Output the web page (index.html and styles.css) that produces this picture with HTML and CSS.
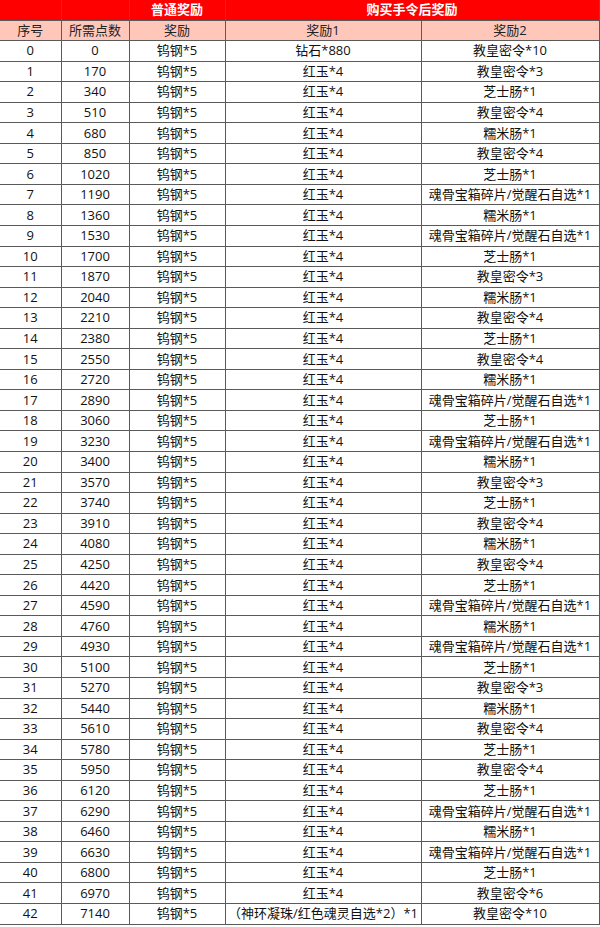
FILE: index.html
```html
<!DOCTYPE html>
<html lang="zh-CN">
<head>
<meta charset="utf-8">
<title>奖励表</title>
<link rel="stylesheet" href="styles.css">
</head>
<body>
<table class="rewards">
<colgroup>
<col class="c1"><col class="c2"><col class="c3"><col class="c4"><col class="c5">
</colgroup>
<thead>
<tr class="head-main"><th></th><th></th><th>普通奖励</th><th colspan="2">购买手令后奖励</th></tr>
<tr class="head-sub"><th>序号</th><th>所需点数</th><th>奖励</th><th>奖励1</th><th>奖励2</th></tr>
</thead>
<tbody>
<tr><td>0</td><td>0</td><td>钨钢*5</td><td>钻石*880</td><td>教皇密令*10</td></tr>
<tr><td>1</td><td>170</td><td>钨钢*5</td><td>红玉*4</td><td>教皇密令*3</td></tr>
<tr><td>2</td><td>340</td><td>钨钢*5</td><td>红玉*4</td><td>芝士肠*1</td></tr>
<tr><td>3</td><td>510</td><td>钨钢*5</td><td>红玉*4</td><td>教皇密令*4</td></tr>
<tr><td>4</td><td>680</td><td>钨钢*5</td><td>红玉*4</td><td>糯米肠*1</td></tr>
<tr><td>5</td><td>850</td><td>钨钢*5</td><td>红玉*4</td><td>教皇密令*4</td></tr>
<tr><td>6</td><td>1020</td><td>钨钢*5</td><td>红玉*4</td><td>芝士肠*1</td></tr>
<tr><td>7</td><td>1190</td><td>钨钢*5</td><td>红玉*4</td><td>魂骨宝箱碎片/觉醒石自选*1</td></tr>
<tr><td>8</td><td>1360</td><td>钨钢*5</td><td>红玉*4</td><td>糯米肠*1</td></tr>
<tr><td>9</td><td>1530</td><td>钨钢*5</td><td>红玉*4</td><td>魂骨宝箱碎片/觉醒石自选*1</td></tr>
<tr><td>10</td><td>1700</td><td>钨钢*5</td><td>红玉*4</td><td>芝士肠*1</td></tr>
<tr><td>11</td><td>1870</td><td>钨钢*5</td><td>红玉*4</td><td>教皇密令*3</td></tr>
<tr><td>12</td><td>2040</td><td>钨钢*5</td><td>红玉*4</td><td>糯米肠*1</td></tr>
<tr><td>13</td><td>2210</td><td>钨钢*5</td><td>红玉*4</td><td>教皇密令*4</td></tr>
<tr><td>14</td><td>2380</td><td>钨钢*5</td><td>红玉*4</td><td>芝士肠*1</td></tr>
<tr><td>15</td><td>2550</td><td>钨钢*5</td><td>红玉*4</td><td>教皇密令*4</td></tr>
<tr><td>16</td><td>2720</td><td>钨钢*5</td><td>红玉*4</td><td>糯米肠*1</td></tr>
<tr><td>17</td><td>2890</td><td>钨钢*5</td><td>红玉*4</td><td>魂骨宝箱碎片/觉醒石自选*1</td></tr>
<tr><td>18</td><td>3060</td><td>钨钢*5</td><td>红玉*4</td><td>芝士肠*1</td></tr>
<tr><td>19</td><td>3230</td><td>钨钢*5</td><td>红玉*4</td><td>魂骨宝箱碎片/觉醒石自选*1</td></tr>
<tr><td>20</td><td>3400</td><td>钨钢*5</td><td>红玉*4</td><td>糯米肠*1</td></tr>
<tr><td>21</td><td>3570</td><td>钨钢*5</td><td>红玉*4</td><td>教皇密令*3</td></tr>
<tr><td>22</td><td>3740</td><td>钨钢*5</td><td>红玉*4</td><td>芝士肠*1</td></tr>
<tr><td>23</td><td>3910</td><td>钨钢*5</td><td>红玉*4</td><td>教皇密令*4</td></tr>
<tr><td>24</td><td>4080</td><td>钨钢*5</td><td>红玉*4</td><td>糯米肠*1</td></tr>
<tr><td>25</td><td>4250</td><td>钨钢*5</td><td>红玉*4</td><td>教皇密令*4</td></tr>
<tr><td>26</td><td>4420</td><td>钨钢*5</td><td>红玉*4</td><td>芝士肠*1</td></tr>
<tr><td>27</td><td>4590</td><td>钨钢*5</td><td>红玉*4</td><td>魂骨宝箱碎片/觉醒石自选*1</td></tr>
<tr><td>28</td><td>4760</td><td>钨钢*5</td><td>红玉*4</td><td>糯米肠*1</td></tr>
<tr><td>29</td><td>4930</td><td>钨钢*5</td><td>红玉*4</td><td>魂骨宝箱碎片/觉醒石自选*1</td></tr>
<tr><td>30</td><td>5100</td><td>钨钢*5</td><td>红玉*4</td><td>芝士肠*1</td></tr>
<tr><td>31</td><td>5270</td><td>钨钢*5</td><td>红玉*4</td><td>教皇密令*3</td></tr>
<tr><td>32</td><td>5440</td><td>钨钢*5</td><td>红玉*4</td><td>糯米肠*1</td></tr>
<tr><td>33</td><td>5610</td><td>钨钢*5</td><td>红玉*4</td><td>教皇密令*4</td></tr>
<tr><td>34</td><td>5780</td><td>钨钢*5</td><td>红玉*4</td><td>芝士肠*1</td></tr>
<tr><td>35</td><td>5950</td><td>钨钢*5</td><td>红玉*4</td><td>教皇密令*4</td></tr>
<tr><td>36</td><td>6120</td><td>钨钢*5</td><td>红玉*4</td><td>芝士肠*1</td></tr>
<tr><td>37</td><td>6290</td><td>钨钢*5</td><td>红玉*4</td><td>魂骨宝箱碎片/觉醒石自选*1</td></tr>
<tr><td>38</td><td>6460</td><td>钨钢*5</td><td>红玉*4</td><td>糯米肠*1</td></tr>
<tr><td>39</td><td>6630</td><td>钨钢*5</td><td>红玉*4</td><td>魂骨宝箱碎片/觉醒石自选*1</td></tr>
<tr><td>40</td><td>6800</td><td>钨钢*5</td><td>红玉*4</td><td>芝士肠*1</td></tr>
<tr><td>41</td><td>6970</td><td>钨钢*5</td><td>红玉*4</td><td>教皇密令*6</td></tr>
<tr><td>42</td><td>7140</td><td>钨钢*5</td><td>（神环凝珠/红色魂灵自选*2）*1</td><td>教皇密令*10</td></tr>
</tbody>
</table>
</body>
</html>
```
FILE: styles.css
```css
html, body {
  margin: 0;
  padding: 0;
  background: #ffffff;
}

.rewards {
  border-collapse: collapse;
  table-layout: fixed;
  width: 599px;
  font-family: "Open Sans", "Noto Sans CJK SC", sans-serif;
  font-size: 13px;
  color: #111111;
}

.c1 { width: 61px; }
.c2 { width: 68px; }
.c3 { width: 96px; }
.c4 { width: 196px; }
.c5 { width: 178px; }

.rewards th,
.rewards td {
  height: 20.56px;
  padding: 0;
  text-align: center;
  vertical-align: middle;
  line-height: 19px;
  border-right: 1px solid #5a5a5a;
  border-bottom: 1px solid #5a5a5a;
  white-space: nowrap;
  overflow: hidden;
  box-sizing: border-box;
}

.head-main th {
  background: #ff0000;
  color: #ffffff;
  font-weight: 700;
  height: 20px;
}

.head-sub th {
  background: #ffc7ba;
  color: #222222;
  font-weight: 400;
}
```
